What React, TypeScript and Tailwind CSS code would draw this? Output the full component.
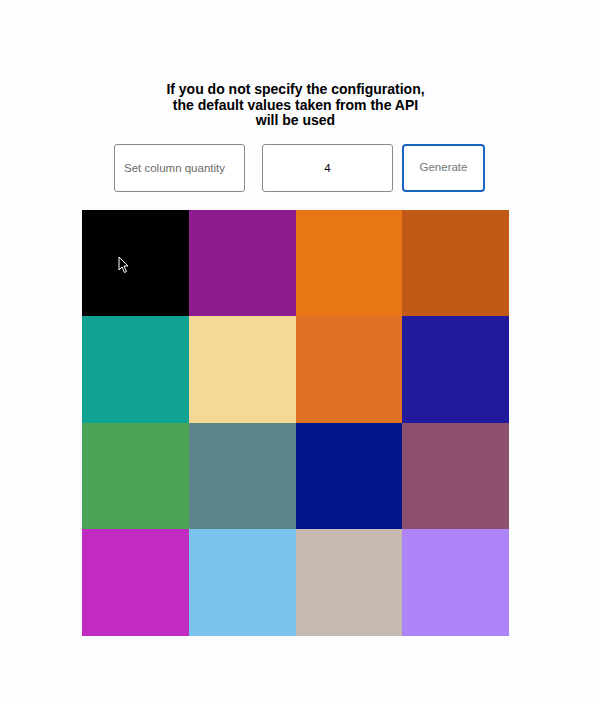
import React, { useState } from 'react';

const colors = [
  '#000000', '#8e1c8e', '#e87615', '#c05a16',
  '#10a393', '#f5d796', '#e07226', '#211b9b',
  '#4ea456', '#5b878a', '#01178b', '#8e506f',
  '#c12bbf', '#7bc3ef', '#c6b9b0', '#ae85f8',
];

const Cursor = () => (
  <svg width="12" height="18" viewBox="0 0 12 18" className="absolute left-[36px] top-[46px]">
    <path d="M1 1 L1 14 L4 11 L6.5 16.5 L8.5 15.5 L6 10 L10 10 Z" fill="#000" stroke="#fff" strokeWidth="1" strokeLinejoin="round" />
  </svg>
);

export default function App() {
  const [columns, setColumns] = useState('4');

  return (
    <div className="min-h-[704px] bg-[#fdfcff] font-['Liberation_Sans',Arial,sans-serif]">
      <div className="w-[427px] ml-[82px] pt-[82px]">
        <h1 className="text-center text-[14px] leading-[15.5px] font-bold text-black">
          If you do not specify the configuration,
          <br />
          the default values taken from the API
          <br />
          will be used
        </h1>

        <div className="flex items-center mt-[15px] pl-[32px]">
          <input
            placeholder="Set column quantity"
            className="w-[131px] h-[48px] px-[9px] border border-[#8a8a8a] rounded-[3px] bg-white text-[11.5px] text-black placeholder:text-[#6b6b6b] outline-none"
          />
          <input
            value={columns}
            onChange={(e) => setColumns(e.target.value)}
            className="w-[131px] h-[48px] ml-[17px] border border-[#8a8a8a] rounded-[3px] bg-white text-center text-[11.5px] text-black outline-none"
          />
          <button className="w-[83px] h-[48px] ml-[9px] border-2 border-[#1a64c0] rounded-[4px] bg-white text-[11.5px] text-[#757575]">
            Generate
          </button>
        </div>

        <div className="relative grid grid-cols-4 mt-[18px] w-[427px] h-[426px]">
          {colors.map((c, i) => (
            <div key={i} style={{ backgroundColor: c }} />
          ))}
          <Cursor />
        </div>
      </div>
    </div>
  );
}
